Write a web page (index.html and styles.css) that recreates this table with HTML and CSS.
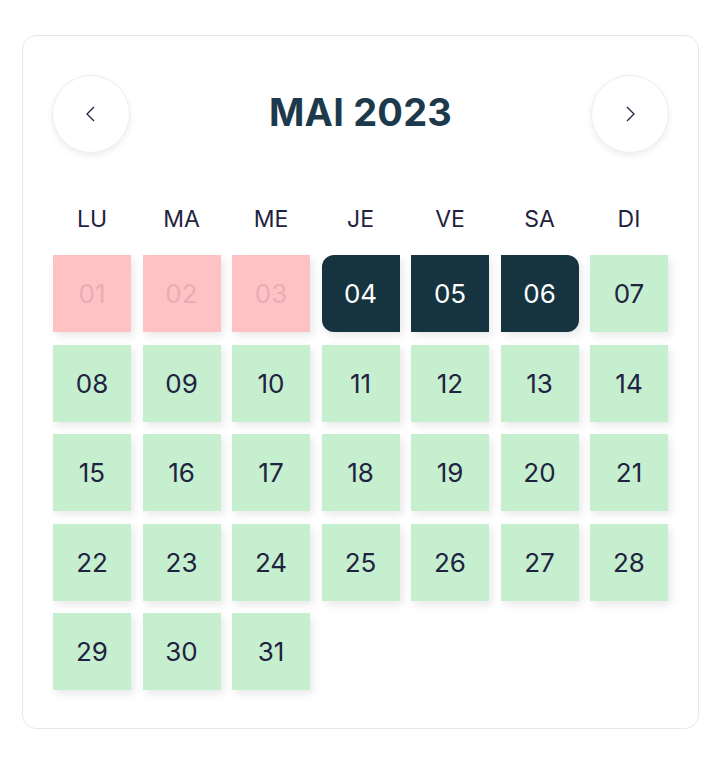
FILE: index.html
```html
<!DOCTYPE html>
<html lang="fr">
<head>
    <meta charset="UTF-8">
    <meta name="viewport" content="width=device-width, initial-scale=1.0">
    <title>Calendrier - Mai 2023</title>
    <link rel="stylesheet" href="styles.css">
</head>
<body>
    <div class="calendar">
        <div class="cal-header">
            <button class="nav-btn" aria-label="Mois précédent">
                <svg width="14" height="18" viewBox="0 0 14 18"><path d="M10 2 L3 9 L10 16" fill="none" stroke="#1f2340" stroke-width="1.3"/></svg>
            </button>
            <h1 class="month">MAI 2023</h1>
            <button class="nav-btn" aria-label="Mois suivant">
                <svg width="14" height="18" viewBox="0 0 14 18"><path d="M4 2 L11 9 L4 16" fill="none" stroke="#1f2340" stroke-width="1.3"/></svg>
            </button>
        </div>

        <div class="weekdays">
            <span>LU</span>
            <span>MA</span>
            <span>ME</span>
            <span>JE</span>
            <span>VE</span>
            <span>SA</span>
            <span>DI</span>
        </div>

        <div class="days">
            <div class="day past">01</div>
            <div class="day past">02</div>
            <div class="day past">03</div>
            <div class="day selected first">04</div>
            <div class="day selected">05</div>
            <div class="day selected last">06</div>
            <div class="day">07</div>
            <div class="day">08</div>
            <div class="day">09</div>
            <div class="day">10</div>
            <div class="day">11</div>
            <div class="day">12</div>
            <div class="day">13</div>
            <div class="day">14</div>
            <div class="day">15</div>
            <div class="day">16</div>
            <div class="day">17</div>
            <div class="day">18</div>
            <div class="day">19</div>
            <div class="day">20</div>
            <div class="day">21</div>
            <div class="day">22</div>
            <div class="day">23</div>
            <div class="day">24</div>
            <div class="day">25</div>
            <div class="day">26</div>
            <div class="day">27</div>
            <div class="day">28</div>
            <div class="day">29</div>
            <div class="day">30</div>
            <div class="day">31</div>
        </div>
    </div>
</body>
</html>
```

FILE: styles.css
```css
body {
    margin: 0;
    padding: 35px 0 0 22px;
    font-family: Inter, "Noto Sans", sans-serif;
    background: #fff;
    color: #1f2340;
}
.calendar {
    width: 615px;
    padding: 39px 30px 38px 30px;
    border: 1.5px solid #e8e8ea;
    border-radius: 14px;
}
.cal-header {
    display: flex;
    align-items: center;
    justify-content: space-between;
    height: 78px;
}
.nav-btn {
    width: 78px;
    height: 78px;
    border-radius: 50%;
    border: 1.5px solid #eeedf4;
    background: #fff;
    box-shadow: 0 3px 6px rgba(40, 40, 80, 0.08);
    display: flex;
    align-items: center;
    justify-content: center;
    padding: 0;
    cursor: pointer;
}
.nav-btn:first-child {
    margin-left: -1px;
}
.nav-btn:last-child {
    margin-right: -1px;
}
.month {
    margin: 0 0 4px 0;
    font-size: 38px;
    font-weight: 700;
    color: #1c3a4c;
    letter-spacing: 0.2px;
}
.weekdays {
    display: grid;
    grid-template-columns: repeat(7, 1fr);
    column-gap: 11.5px;
    margin-top: 51px;
    margin-bottom: 21px;
    height: 30px;
    line-height: 30px;
    text-align: center;
    font-size: 23px;
    color: #1f2340;
}
.days {
    display: grid;
    grid-template-columns: repeat(7, 1fr);
    grid-auto-rows: 77px;
    column-gap: 11.5px;
    row-gap: 12.5px;
}
.day {
    display: flex;
    align-items: center;
    justify-content: center;
    background: #c6efd0;
    font-size: 26px;
    color: #1f2340;
    box-shadow: 3px 4px 8px rgba(0, 0, 0, 0.09);
}
.day.past {
    background: #ffc2c4;
    color: #e5adb5;
}
.day.selected {
    background: #163440;
    color: #fff;
}
.day.first {
    border-radius: 12px 0 0 12px;
}
.day.last {
    border-radius: 0 12px 12px 0;
}
```
